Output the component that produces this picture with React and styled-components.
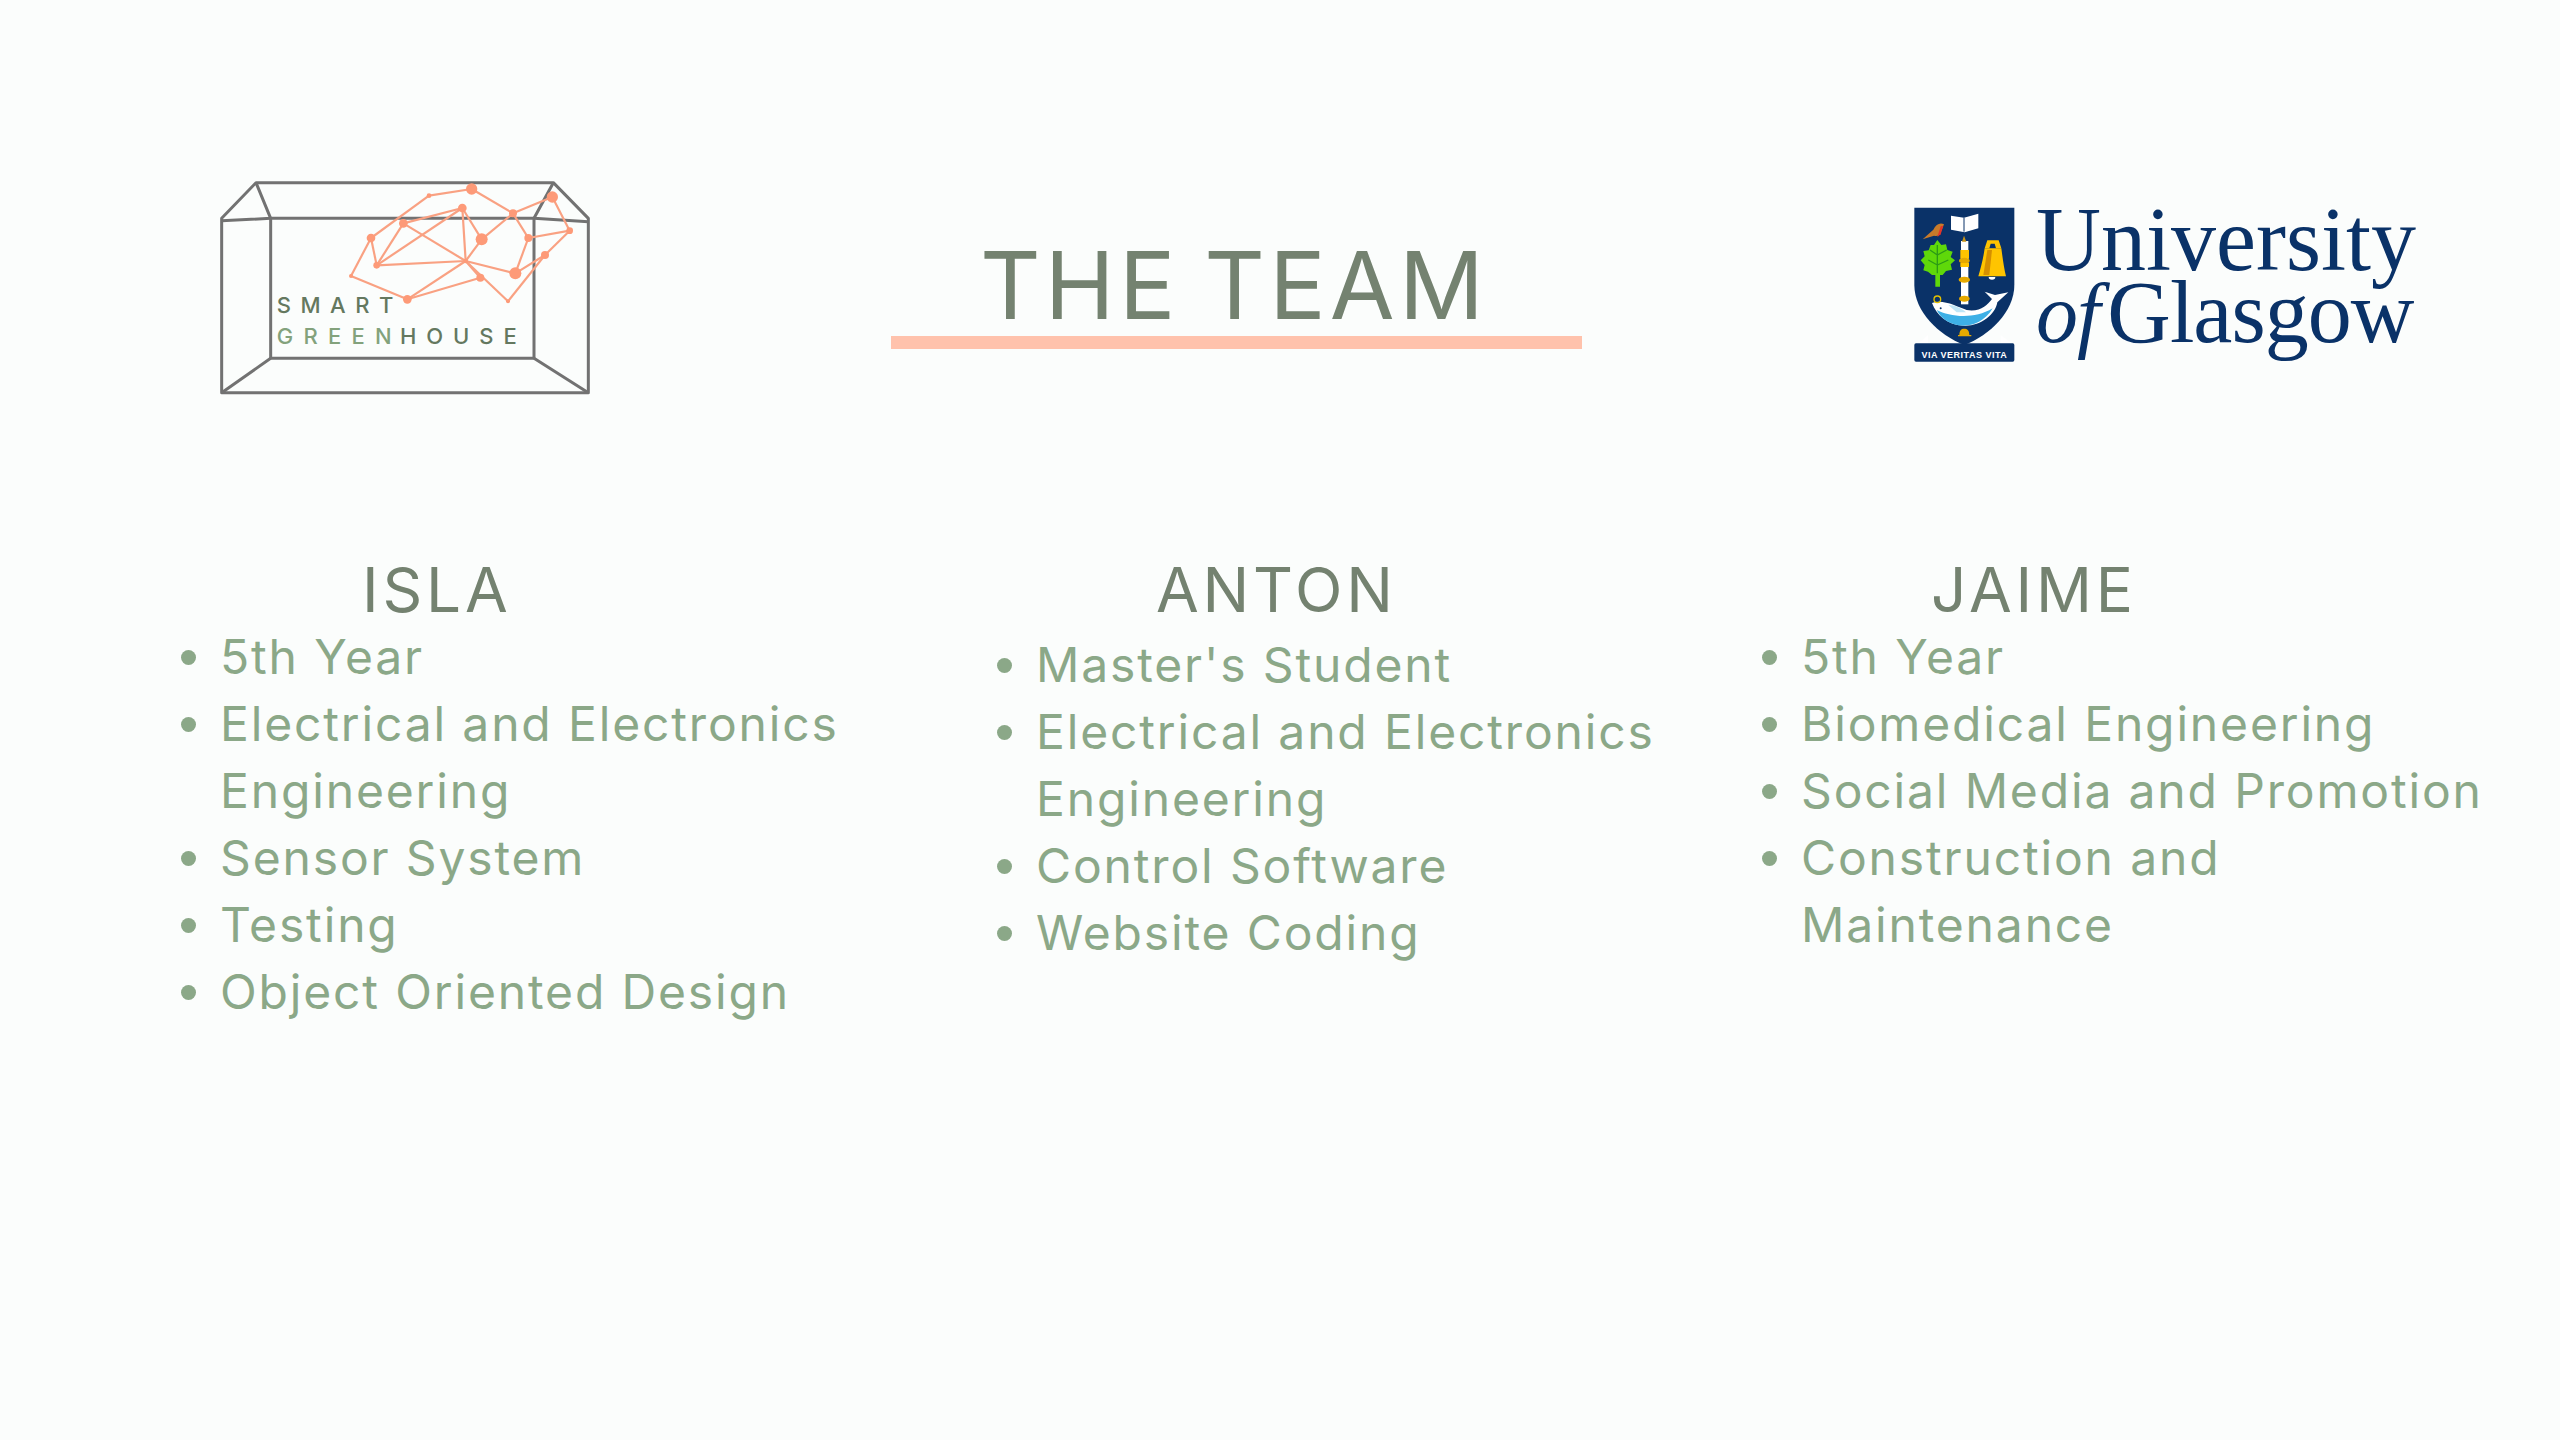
import React from 'react'
import styled, { createGlobalStyle } from 'styled-components'

const GlobalStyle = createGlobalStyle`
  html, body { margin: 0; padding: 0; background: #fbfdfc; }
`;

const Page = styled.div`
  width: 2560px;
  height: 1440px;
  overflow: hidden;
  background: #fbfdfc;
  font-family: Inter, "Liberation Sans", sans-serif;
`;

const Header = styled.header`
  display: grid;
  grid-template-columns: 691px 691px 1fr;
  padding: 160px 0 0 200px;
  height: 400px;
  box-sizing: border-box;
`;

const TitleBlock = styled.div`
  padding-top: 75px;
`;

const Title = styled.h1`
  margin: 0;
  height: 101px;
  padding-right: 5px;
  line-height: 100px;
  font-size: 94px;
  font-weight: 400;
  letter-spacing: 4.2px;
  word-spacing: -6px;
  text-align: center;
  color: #748270;
`;

const TitleBar = styled.div`
  height: 13px;
  background: #ffc2ac;
`;

const UniLogo = styled.div`
  display: flex;
  align-items: flex-start;
  gap: 6px;
  padding: 47px 0 0 332px;
`;

const UniName = styled.div`
  font-family: "Liberation Serif", serif;
  color: #0a3268;
`;

const UniLine = styled.div`
  height: 73px;
  line-height: 66px;
  font-size: ${p => p.$size}px;
  letter-spacing: ${p => p.$spacing || 0}px;
  white-space: nowrap;
  em { font-size: 84px; margin-right: 8px; }
`;

const Team = styled.section`
  display: grid;
  grid-template-columns: 816px 765px 1fr;
  padding-left: 180px;
  margin-top: 155px;
`;

const Member = styled.div`
  min-width: 0;
`;

const Name = styled.h2`
  margin: 0;
  padding-left: ${p => p.$indent}px;
  height: 68px;
  line-height: 70px;
  font-size: 62px;
  font-weight: 400;
  letter-spacing: 3.8px;
  color: #748270;
`;

const Facts = styled.ul`
  list-style: none;
  margin: ${p => p.$offset}px 0 0;
  padding: 0;
  width: ${p => p.$width}px;
`;

const Fact = styled.li`
  display: flex;
  align-items: flex-start;
  line-height: 67px;
  font-size: 48px;
  letter-spacing: 1.85px;
  color: #8ba888;
  &::before {
    content: "";
    flex: none;
    width: 15px;
    height: 15px;
    margin: 27px 24px 0 1px;
    border-radius: 50%;
    background: #8ba888;
  }
`;

const members = [
  { name: 'ISLA', indent: 182, offset: 0, width: 680, facts: ['5th Year', 'Electrical and Electronics Engineering', 'Sensor System', 'Testing', 'Object Oriented Design'] },
  { name: 'ANTON', indent: 160, offset: 8, width: 680, facts: ["Master's Student", 'Electrical and Electronics Engineering', 'Control Software', 'Website Coding'] },
  { name: 'JAIME', indent: 170, offset: 0, width: 745, facts: ['5th Year', 'Biomedical Engineering', 'Social Media and Promotion', 'Construction and Maintenance'] },
];

const nodes = {
  A: [815, 87, 17], B: [687, 107, 7], C: [1057, 111, 17], D: [787, 144, 13], E: [939, 160, 12], F: [610, 190, 13],
  G: [1109, 212, 10], H: [513, 234, 13], I: [845, 238, 18], J: [985, 234, 12], K: [1035, 285, 12], L: [797, 303, 7],
  M: [530, 316, 10], N: [946, 340, 18], O: [453, 348, 6], P: [841, 353, 12], Q: [622, 418, 13], R: [924, 424, 6],
};
const edges = ['BA', 'AE', 'EC', 'CG', 'GJ', 'JE', 'EI', 'ID', 'DF', 'HB', 'HM', 'FM', 'MD', 'FL', 'DL', 'LI', 'LQ', 'ML', 'LN', 'NK', 'KG', 'KR', 'RL', 'LP', 'PQ', 'OQ', 'OH', 'JN'];

const GreenhouseLogo = () => (
  <svg width="420" height="250" viewBox="0 0 1260 750">
    <g fill="none" stroke="#727272" strokeWidth="9" strokeLinejoin="round">
      <path d="M65 175 L168 68 H1060 L1165 175 V698 H65 Z" />
      <path d="M212 175 H1002 V595 H212 Z" />
      <path d="M168 68 L212 175 M1060 68 L1002 175 M65 698 L212 595 M1165 698 L1002 595 M65 182 L212 175 M1002 175 L1165 185" />
    </g>
    <g stroke="#f9a182" strokeWidth="6.5">
      {edges.map(e => {
        const a = nodes[e[0]]
        const b = nodes[e[1]]
        return <line key={e} x1={a[0]} y1={a[1]} x2={b[0]} y2={b[1]} />
      })}
    </g>
    <g fill="#fd9a78">
      {Object.keys(nodes).map(k => <circle key={k} cx={nodes[k][0]} cy={nodes[k][1]} r={nodes[k][2]} />)}
    </g>
    <g fontFamily="Inter, sans-serif" fontSize="66" fontWeight="500">
      <text x="230" y="460" fill="#64785f" textLength="350">SMART</text>
      <text x="230" y="552" fill="#83a27c" textLength="345">GREEN</text>
      <text x="600" y="552" fill="#64785f" textLength="350">HOUSE</text>
    </g>
  </svg>
);

const Crest = () => (
  <svg width="130" height="170" viewBox="0 0 390 510" style={{ marginLeft: -14, marginTop: -12, flex: 'none' }}>
    <path d="M43 38 H343 V270 C343 350 270 420 193 450 C116 420 43 350 43 270 Z" fill="#0a3268" />
    <path d="M52 448 L84 420 V445 C120 450 150 452 193 452 C236 452 266 450 302 445 V420 L340 448 Z" fill="#fff" />
    <rect x="43" y="445" width="300" height="55" rx="5" fill="#0a3268" />
    <text x="193" y="488" fill="#fff" fontFamily="'Liberation Sans', sans-serif" fontSize="27" fontWeight="700" textAnchor="middle" letterSpacing="1.5">VIA VERITAS VITA</text>
    {/* book */}
    <path d="M153 62 L192 68 L235 56 V100 L194 112 L153 104 Z" fill="#fff" />
    <path d="M192 68 V110" stroke="#0a3268" strokeWidth="3" />
    {/* bird */}
    <path d="M68 133 L100 104 C108 88 120 82 132 88 L124 108 C120 120 112 126 102 122 Z" fill="#c77a2a" />
    <path d="M122 94 L130 92 L122 118 L112 126 Z" fill="#e4342a" />
    {/* tree */}
    <path d="M112 135 L124 150 L138 148 L142 165 L158 170 L152 186 L165 196 L152 208 L156 224 L138 228 L128 240 H120 V275 H106 V240 H96 L84 230 L70 226 L74 210 L62 196 L74 184 L70 168 L86 166 L92 150 L102 150 Z" fill="#5fd80a" />
    <path d="M112 150 V235 M112 180 L90 165 M112 180 L140 165 M112 210 L85 195 M112 210 L145 195" stroke="#2b9b16" strokeWidth="4" fill="none" />
    {/* staff */}
    <rect x="183" y="138" width="22" height="190" fill="#fff" />
    <path d="M192 122 L199 140 H186 Z" fill="#c9951a" />
    <rect x="181" y="165" width="26" height="26" fill="#ffc400" />
    <ellipse cx="193" cy="197" rx="16" ry="9" fill="#e5a900" />
    <rect x="181" y="204" width="26" height="12" fill="#ffc400" />
    <ellipse cx="193" cy="254" rx="17" ry="9" fill="#e5a900" />
    <ellipse cx="193" cy="311" rx="16" ry="9" fill="#e5a900" />
    {/* bell */}
    <path d="M262 136 H296 L304 160 H288 L284 146 H272 L268 160 H254 Z" fill="#ffc400" />
    <path d="M254 160 H304 C308 190 312 220 318 244 H235 C242 220 250 190 254 160 Z" fill="#ffc400" />
    <path d="M262 165 H276 L268 240 H250 Z" fill="#d58f00" />
    <path d="M266 246 A10 8 0 0 0 286 246 Z" fill="#fff" />
    {/* fish */}
    <path d="M96 324 C130 312 170 335 200 345 C240 352 262 330 276 312 L254 290 L285 300 L325 292 L292 322 C286 360 240 395 190 392 C140 390 110 360 96 324 Z" fill="#fff" />
    <path d="M110 345 C150 365 220 375 278 340 C256 378 220 392 190 392 C150 390 124 372 110 345 Z" fill="#3eb0e6" />
    <path d="M145 330 C165 330 185 340 198 352 L170 352 Z" fill="#bfe6f7" />
    <circle cx="112" cy="313" r="10" fill="none" stroke="#e5c100" strokeWidth="4" />
    <circle cx="122" cy="340" r="3" fill="#0a3268" />
    <path d="M178 420 C178 406 184 401 192 401 C202 401 208 406 208 420 H214 V424 H174 V420 Z" fill="#e5a900" />
  </svg>
);

export default function App() {
  return (
    <Page>
      <GlobalStyle />
      <Header>
        <GreenhouseLogo />
        <TitleBlock>
          <Title>THE TEAM</Title>
          <TitleBar />
        </TitleBlock>
        <UniLogo>
          <Crest />
          <UniName>
            <UniLine $size={90}>University</UniLine>
            <UniLine $size={88} $spacing={-1}><em>of</em>Glasgow</UniLine>
          </UniName>
        </UniLogo>
      </Header>
      <Team>
        {members.map(m => (
          <Member key={m.name}>
            <Name $indent={m.indent}>{m.name}</Name>
            <Facts $offset={m.offset} $width={m.width}>
              {m.facts.map(f => <Fact key={f}>{f}</Fact>)}
            </Facts>
          </Member>
        ))}
      </Team>
    </Page>
  )
}
